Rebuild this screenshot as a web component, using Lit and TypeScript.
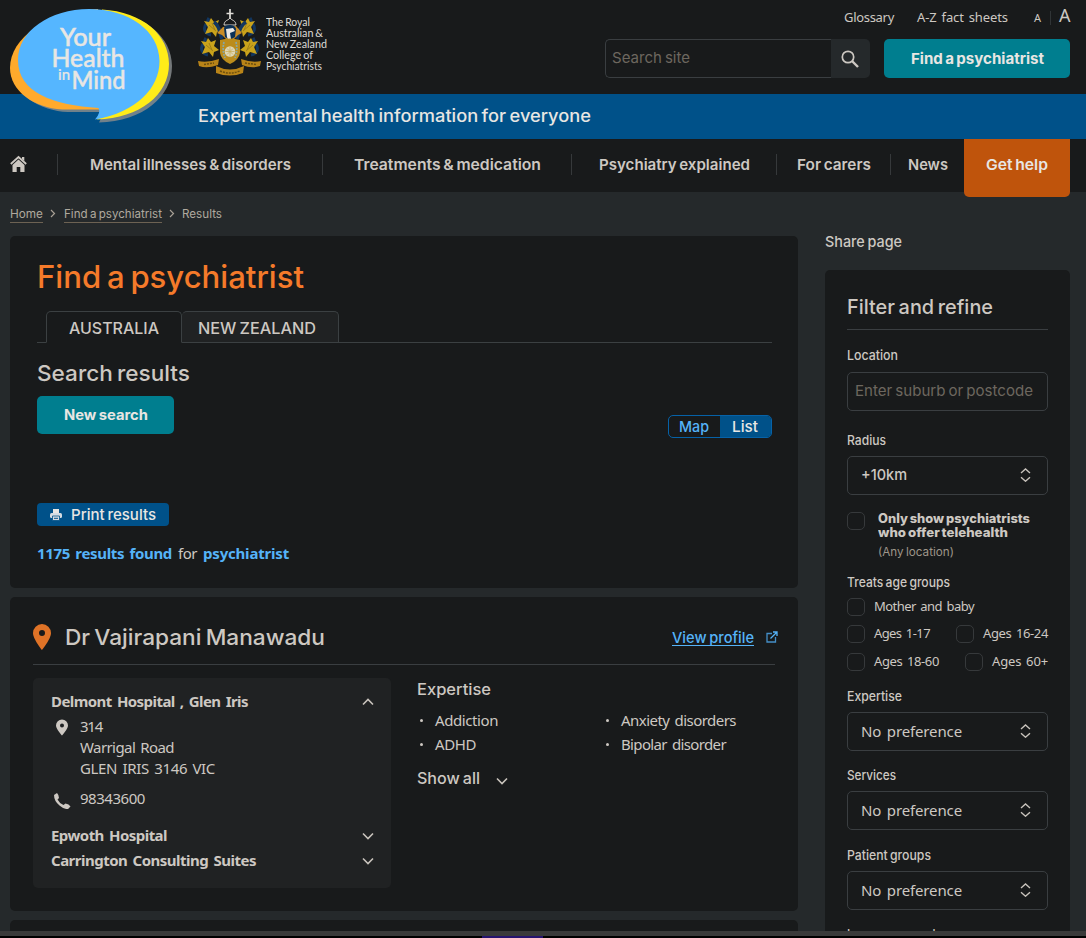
import { LitElement, html, css, svg } from "lit";
import { customElement, property } from "lit/decorators.js";

/** One line of text that spans `w` pixels: headings stretch, body text is tracked. */
@customElement("fit-text")
class FitText extends LitElement {
  @property({ type: Number }) w = 0;
  static styles = css`
    :host { display: block; white-space: nowrap; flex: none; }
    .t { display: inline-block; vertical-align: top; transform-origin: 0 50%; }
  `;
  firstUpdated() {
    const el = this.renderRoot.querySelector(".t") as HTMLElement;
    const n = (this.textContent || "").trim().length;
    const body = getComputedStyle(this).fontFamily.includes("Noto");
    el.style.wordSpacing = body ? "0.12em" : "-0.08em";
    const natural = el.getBoundingClientRect().width;
    this.style.width = `${this.w}px`;
    if (body) el.style.letterSpacing = `${(this.w - natural) / n}px`;
    else el.style.transform = `scaleX(${this.w / natural})`;
  }
  render() {
    return html`<span class="t"><slot></slot></span>`;
  }
}

const t = (text: string, w: number, cls = "") => html`<fit-text class=${cls} .w=${w}>${text}</fit-text>`;

const chevron = (up = false) => html`<svg class="chev" width="12" height="8" viewBox="0 0 12 8">
  <path d=${up ? "M1 6.5 6 1.5 11 6.5" : "M1 1.5 6 6.5 11 1.5"} fill="none" stroke="#c8c3bc" stroke-width="1.6"/></svg>`;
const crumbArrow = html`<svg class="crumb-arrow" width="6" height="9" viewBox="0 0 6 9"><path d="M1 1 4.5 4.5 1 8" fill="none" stroke="#a8a095" stroke-width="1.2"/></svg>`;
const sorter = html`<svg width="11" height="14" viewBox="0 0 11 14"><path d="M1 5 5.5 1 10 5M1 9.2 5.5 13.2 10 9.2" fill="none" stroke="#c8c3bc" stroke-width="1.4"/></svg>`;

const leaf = (tf: string) => svg`<g transform=${tf}>
  <path d="M7 19C1 18-1 13 2 8M9 14C4 13 2 6 5 2" fill="none" stroke="#12365f" stroke-width="3"/>
  <path d="M0 5 5 6 7 2 10 6 15 4 13 10 18 14 13 16 12 21 8 16 1 18 4 11Z" fill="#c9a21b"/>
  <path d="M5 9 12 15M8 7 11 14" stroke="#9a7a18" stroke-width=".9"/></g>`;

const crest = html`<svg class="crest" width="64" height="68" viewBox="0 0 64 68">
  ${leaf("translate(6 8)")}${leaf("translate(57 8) scale(-1 1)")}
  ${leaf("translate(3 28)")}${leaf("translate(60 28) scale(-1 1)")}
  <path d="M16 14C22 18 22 26 24 31M48 14C41 18 41 26 39 31" fill="none" stroke="#12365f" stroke-width="3.5"/>
  <path d="M32 1V13M28.500 5.500H35.500" stroke="#e0ded9" stroke-width="1.700"/>
  <path d="M26 17C26.500 12 29.500 13 32 10 34.500 13 37.500 12 38 17Z" fill="#17191b" stroke="#d6d3ce" stroke-width="1"/>
  <path d="M25 19 19 25 24 27 28 31H36L40 27 44 25 38 18Z" fill="#c98c27"/>
  <path d="M26 20C27 16 37 16 38 21L37 29 32 32 27 29Z" fill="#0b3158"/>
  <path d="M28 21 35 20 37 23 32 25 33 31 37 34H31L29 29Z" fill="#eae8e4"/>
  <path d="M22 32Q32 29 42 32V45Q41 52 32 56 23 52 22 45Z" fill="#bb8c1c"/>
  <path d="M26 34Q24 42 27 50M38 34Q40 42 37 50" fill="none" stroke="#87a7a5" stroke-width="1.700" stroke-dasharray="2 1"/>
  <circle cx="32" cy="43.500" r="5.300" fill="#ded7b7"/><path d="M32 39V48M27.500 43.500H36.500M29 40.500 35 46.500M35 40.500 29 46.500" stroke="#c7a951" stroke-width=".7"/>
  <path d="M0 53Q10 55 21 51L20 57Q9 61 1 58ZM63 53Q54 55 43 51L44 57Q54 61 62 58Z" fill="#b98418"/>
  <path d="M18 58Q32 65 46 58L45 65Q32 70 18 65Z" fill="#b98418"/>
  <path d="M6 56.500 16 55M47 55 58 56.500M22 63Q32 67 42 63" fill="none" stroke="#6e500f" stroke-width="1.500" stroke-dasharray="2 1"/>
</svg>`;

const bubble = html`<svg class="bubble" width="180" height="130" viewBox="0 0 180 130">
  <path d="M104 11C145 14 172 37 172 66C172 97 143 121 99 122.500L104 112H68C40 111 14 94 11 72Z" fill="#85898b" opacity=".85"/>
  <path d="M98 9C46 12 10 38 10 68C10 91 34 108 62 109.500H99L104 100Z" fill="#ffaa2c"/>
  <path d="M102 9.500C143 12 169 35 169 64C169 95 140 118 97 119.500L110 100Z" fill="#ffec19"/>
  <path d="M89 9C129 9 159.500 31 159.500 61C159.500 88 137 112 95 119.500Q101 113 98.500 108C54 105 18 93 18 60C18 31 50 9 89 9Z" fill="#55b6ff"/>
  <g fill="#e8e6e3" stroke="#e8e6e3" stroke-width=".45" font-family="Lato, sans-serif">
    <text x="60" y="46" font-size="24" textLength="51" lengthAdjust="spacingAndGlyphs">Your</text>
    <text x="51.500" y="67.300" font-size="25" textLength="73" lengthAdjust="spacingAndGlyphs">Health</text>
    <text x="58" y="80" font-size="15" textLength="12" lengthAdjust="spacingAndGlyphs" stroke-width=".2">in</text>
    <text x="71.500" y="88.700" font-size="25" textLength="54" lengthAdjust="spacingAndGlyphs">Mind</text>
  </g>
</svg>`;

@customElement("app-root")
class AppRoot extends LitElement {
  static styles = css`
    * { box-sizing: border-box; }
    :host { display: flex; flex-direction: column; height: 938px; overflow: hidden; position: relative; background: #25292b; color: #cdc8c2; font: 500 15px/20px Inter, sans-serif; }
    svg { display: block; flex: none; }
    .noto { font-family: "Noto Sans", sans-serif; font-weight: 400; }
    .bold { font-weight: 700; }
    .bubble { position: absolute; left: 0; top: 0; }
    .top { height: 94px; flex: none; background: #181a1b; display: flex; justify-content: space-between; padding: 8px 16px 0 198px; }
    .college { display: flex; gap: 4px; }
    .college-name { padding-top: 9px; font: 400 10.5px/10.900px Lato, sans-serif; color: #dedbd6; }
    .tools { width: 465px; }
    .links { display: flex; justify-content: flex-end; height: 31px; font-size: 13px; line-height: 18px; }
    .links .az { margin-left: 23px; }
    .small-a { margin-left: 26px; font-size: 11px; line-height: 19px; }
    .sep-a { width: 1px; height: 14px; margin: 3px 8px 0; background: #303436; }
    .big-a { font-size: 18px; line-height: 15px; }
    .searchrow { display: flex; height: 39px; }
    .search { width: 226px; border: 1px solid #3a3e41; border-right: 0; border-radius: 5px 0 0 5px; padding: 8px 6px; font-weight: 400; color: #6d675f; }
    .go { width: 39px; background: #25292b; border-radius: 0 5px 5px 0; display: grid; place-items: center; padding-right: 2px; }
    .find { margin-left: 14px; width: 186px; }
    .teal { background: #007e8f; border-radius: 5px; display: grid; place-items: center; font-weight: 700; color: #e8e6e3; }
    .tag { flex: none; height: 45px; background: #005189; padding: 12px 0 0 197.500px; font-size: 17px; color: #e8e6e3; }
    .nav { flex: none; height: 53px; background: #181a1b; display: flex; padding: 15px 16px 0 10px; line-height: 21px; font-weight: 600; }
    .nav .cell { height: 21px; display: flex; justify-content: center; border-left: 1px solid #36393b; }
    .home { width: 47px; padding-top: 1px; }
    .c1 { width: 265px; } .c2 { width: 249px; } .c3 { width: 205px; } .c4 { width: 114px; } .c5 { width: 74px; }
    .help { width: 106px; height: 58px; margin-top: -15px; background: #bf540c; color: #e8e6e3; border-radius: 0 0 5px 5px; display: grid; justify-items: center; padding-top: 15px; z-index: 1; }
    .crumbs { flex: none; height: 44px; display: flex; padding: 14px 0 0 10px; font-size: 11.500px; line-height: 16px; font-weight: 400; color: #b0a99f; }
    .crumbs .u { height: 17px; border-bottom: 1px solid #6d6253; }
    .crumb-arrow { margin: 3px 7.500px 0 7px; width: 6px; }
    .page { flex: 1; min-height: 0; display: flex; gap: 27px; padding: 0 16px 0 10px; overflow: hidden; }
    .main { width: 788px; display: flex; flex-direction: column; }
    .card { background: #181a1b; border-radius: 5px; flex: none; }
    .summary { height: 352px; padding: 21px 26px 0 27px; }
    .h1 { font-size: 31px; line-height: 40px; color: #f57a2a; font-weight: 500; }
    .tabs { display: flex; margin-top: 14px; height: 32px; padding-left: 9px; border-bottom: 1px solid #3b4042; }
    .tab { height: 32px; border: 1px solid #3b4042; border-bottom-color: #181a1b; border-radius: 5px 5px 0 0; display: flex; justify-content: center; padding-top: 7px; width: 136px; font-size: 15.500px; }
    .tab.off { width: 157px; height: 31px; border-left: 0; border-bottom: 0; background: #202223; padding-right: 6px; }
    .h2 { font-size: 22px; line-height: 30px; font-weight: 500; margin-top: 15px; }
    .new { width: 137px; height: 38px; margin-top: 8px; font-size: 14px; }
    .toggle { display: flex; width: 104px; height: 23px; margin: -19px 0 0 auto; border: 1px solid #0662a8; border-radius: 5px; overflow: hidden; line-height: 21px; color: #55b3f8; }
    .m { padding-left: 10px; width: 51px; } .l { flex: 1; padding-left: 12px; background: #005189; color: #e8e6e3; }
    .print { display: flex; align-items: center; gap: 9px; width: 132px; height: 23px; margin-top: 65px; padding-left: 13px; background: #005189; border-radius: 4px; color: #e8e6e3; }
    .found { display: flex; gap: 6px; margin-top: 17px; color: #55b3f8; }
    .found .for { color: #cdc8c2; }
    .doctor { height: 314px; margin-top: 9px; padding: 27px 20px 0 23px; }
    .head { display: flex; align-items: center; height: 26px; }
    .name { margin: -1px 0 0 14px; font-size: 22px; line-height: 26px; }
    .profile { margin-left: auto; color: #55b3f8; height: 17px; border-bottom: 1px solid #55b3f8; line-height: 17px; }
    .ext { margin-left: 12px; }
    .rule { height: 1px; background: #3a3e41; margin: 14px 3px 0 0; }
    .cols { display: flex; gap: 26px; margin-top: 13px; }
    .places { width: 358px; height: 210px; background: #202223; border-radius: 5px; padding: 13px 17px 0 18px; }
    .place { display: flex; justify-content: space-between; align-items: center; height: 20px; }
    .place .chev { margin-top: 2px; }
    .addr { display: flex; margin-top: 5px; line-height: 21px; }
    .ico { width: 29px; padding: 3px 0 0 4px; }
    .phone { margin-top: 9px; } .phone .ico { padding: 5px 0 0 3px; }
    .p2 { margin-top: 16px; } .p3 { margin-top: 5px; }
    .exp { padding-top: 1px; }
    .exp-title { font-size: 16px; font-weight: 500; }
    .list { display: grid; grid-template-columns: 186px 140px; margin-top: 9px; line-height: 24px; }
    .li { display: flex; padding-left: 3px; align-items: center; }
    .li::before { content: ""; width: 3px; height: 3px; margin-right: 12px; border-radius: 50%; background: #cdc8c2; }
    .show { display: flex; align-items: center; gap: 16px; margin-top: 12px; font-size: 16px; }
    .show .chev { margin-top: 5px; }
    .next { height: 60px; margin-top: 9px; }
    .side { width: 245px; }
    .share { line-height: 12px; padding-bottom: 22px; }
    .panel { height: 700px; padding: 24px 22px 0; font-size: 13px; line-height: 16px; font-weight: 500; }
    .filter { font-size: 20px; line-height: 26px; font-weight: 500; }
    .panel .rule { margin: 9px 0 17px; }
    .input { height: 39px; border: 1px solid #3a3e41; border-radius: 5px; padding: 8px 7px; margin-top: 9px; font-size: 15px; line-height: 20px; font-weight: 400; color: #6d675f; }
    .select { height: 39px; border: 1px solid #3a3e41; border-radius: 5px; padding: 0 16px 2px 13px; display: flex; justify-content: space-between; align-items: center; font-size: 15px; }
    .g21 { margin-top: 21px; } .g17 { margin-top: 17px; } .g16 { margin-top: 16px; } .g8 { margin-top: 8px; }
    .box { width: 18px; height: 18px; border: 1px solid #36393b; border-radius: 5px; flex: none; }
    .tele { display: flex; gap: 13px; margin-top: 17px; line-height: 14px; font-weight: 800; font-size: 12.500px; }
    .any { font-size: 11.500px; font-weight: 400; color: #9e968a; margin-top: 4px; line-height: 16px; }
    .treat { margin-top: 14px; }
    .ages { display: flex; margin-top: 8px; height: 18px; line-height: 16px; gap: 9px; }
    .ages + .ages { margin-top: 9px; } .ages.last { margin-top: 10px; }
    .ages .second { margin-left: auto; }
    .dock { height: 7px; flex: none; background: #3a3a3a; border-bottom: 2px solid #000; position: relative; }
    .dock::after { content: ""; position: absolute; left: 482px; top: 5px; width: 61px; height: 2px; background: #26136e; }
  `;

  private select(label: string, lw: number, value: string, vw: number, gap: string) {
    return html`${t(label, lw, gap)}<div class="select g8">${t(value, vw, value[0] === "N" ? "noto" : "")}${sorter}</div>`;
  }

  render() {
    return html`
      <header class="top">
        <div class="college">${crest}
          <div class="college-name">${t("The Royal", 44)}${t("Australian &", 57)}${t("New Zealand", 61)}${t("College of", 47)}${t("Psychiatrists", 56)}</div>
        </div>
        <div class="tools">
          <div class="links noto">${t("Glossary", 50)}${t("A-Z fact sheets", 91, "az")}${t("A", 8, "small-a")}<span class="sep-a"></span>${t("A", 11, "big-a")}</div>
          <div class="searchrow">
            <div class="search">${t("Search site", 78)}</div>
            <div class="go"><svg width="18" height="18" viewBox="0 0 18 18"><circle cx="7" cy="7" r="5.700" fill="none" stroke="#cdc8c2" stroke-width="1.700"/><path d="m11 11 6 6" stroke="#cdc8c2" stroke-width="2.400"/></svg></div>
            <div class="find teal">${t("Find a psychiatrist", 133)}</div>
          </div>
        </div>
      </header>
      <div class="tag">${t("Expert mental health information for everyone", 393)}</div>
      <nav class="nav">
        <div class="home"><svg width="17" height="18" viewBox="0 0 17 18"><path d="M.8 9 8.500 2 16.200 9" fill="none" stroke="#cdc8c2" stroke-width="1.800"/><path d="M12 2h2.300v4L12 4ZM8.500 4.600 14.500 10V17H10.300V12H6.700V17H2.500V10Z" fill="#cdc8c2"/></svg></div>
        <div class="cell c1">${t("Mental illnesses & disorders", 201)}</div>
        <div class="cell c2">${t("Treatments & medication", 187)}</div>
        <div class="cell c3">${t("Psychiatry explained", 151)}</div>
        <div class="cell c4">${t("For carers", 74)}</div>
        <div class="cell c5">${t("News", 40)}</div>
        <div class="help">${t("Get help", 62)}</div>
      </nav>
      <div class="crumbs">${t("Home", 33, "u")}${crumbArrow}${t("Find a psychiatrist", 98, "u")}${crumbArrow}${t("Results", 40)}</div>
      <div class="page">
        <main class="main">
          <section class="card summary">
            ${t("Find a psychiatrist", 267, "h1")}
            <div class="tabs"><div class="tab">${t("AUSTRALIA", 90)}</div><div class="tab off">${t("NEW ZEALAND", 118)}</div></div>
            ${t("Search results", 153, "h2")}
            <div class="new teal">${t("New search", 84)}</div>
            <div class="toggle"><div class="m">${t("Map", 30)}</div><div class="l">${t("List", 26)}</div></div>
            <div class="print"><svg width="12" height="12" viewBox="0 0 12 12"><path d="M3 0h6v4H3Z" fill="#e8e6e3"/><rect y="4" width="12" height="5" rx="1.500" fill="#d5dce2"/><path d="M2.500 7h7v4.500h-7Z" fill="#d5dce2" stroke="#005189" stroke-width=".8"/><path d="M4 9.300h4" stroke="#005189"/></svg>${t("Print results", 85)}</div>
            <div class="found noto">${t("1175 results found", 135, "bold")}${t("for", 19, "for")}${t("psychiatrist", 86, "bold")}</div>
          </section>
          <section class="card doctor">
            <div class="head"><svg width="18" height="26" viewBox="0 0 18 26"><path fill-rule="evenodd" d="M9 0a9 9 0 0 0-9 9c0 6 9 17 9 17s9-11 9-17a9 9 0 0 0-9-9Zm0 6a3 3 0 1 1 0 6 3 3 0 0 1 0-6Z" fill="#df7327"/></svg>
              ${t("Dr Vajirapani Manawadu", 260, "name")}${t("View profile", 82, "profile")}
              <svg class="ext" width="12" height="12" viewBox="0 0 12 12"><path d="M6 2.500H1V11H9.500V6" fill="none" stroke="#448fc8" stroke-width="1.300"/><path d="M4.500 7.500 10.800 1.200M7 1h4v4" fill="none" stroke="#55b3f8" stroke-width="1.300"/></svg></div>
            <div class="rule"></div>
            <div class="cols">
              <div class="places noto">
                <div class="place bold">${t("Delmont Hospital , Glen Iris", 197)}${chevron(true)}</div>
                <div class="addr"><div class="ico"><svg width="14" height="17" viewBox="0 0 14 17"><path fill-rule="evenodd" d="M7 .5a6 6 0 0 0-6 6C1 10 7 16.500 7 16.500S13 10 13 6.500a6 6 0 0 0-6-6Zm0 4a2 2 0 1 1 0 4 2 2 0 0 1 0-4Z" fill="#cdc8c2"/></svg></div><div>${t("314", 22)}${t("Warrigal Road", 94)}${t("GLEN IRIS 3146 VIC", 135)}</div></div>
                <div class="addr phone"><div class="ico"><svg width="17" height="16" viewBox="0 0 17 16"><path d="M0 2 3 0Q5 2 5 5L3.500 6.500Q5.500 10.500 9.500 12L11.500 10.500Q15 11 16.500 13.500L14 16Q10 16.500 5.500 12.500 0 8 0 2Z" fill="#cdc8c2"/></svg></div>${t("98343600", 65)}</div>
                <div class="place bold p2">${t("Epwoth Hospital", 116)}${chevron()}</div>
                <div class="place bold p3">${t("Carrington Consulting Suites", 205)}${chevron()}</div>
              </div>
              <div class="exp">
                ${t("Expertise", 74, "exp-title")}
                <div class="list noto"><div class="li">${t("Addiction", 63)}</div><div class="li">${t("Anxiety disorders", 115)}</div><div class="li">${t("ADHD", 41)}</div><div class="li">${t("Bipolar disorder", 105)}</div></div>
                <div class="show">${t("Show all", 63)}${chevron()}</div>
              </div>
            </div>
          </section>
          <section class="card next"></section>
        </main>
        <aside class="side">
          ${t("Share page", 77, "share")}
          <section class="card panel">
            ${t("Filter and refine", 146, "filter")}
            <div class="rule"></div>
            ${t("Location", 51)}
            <div class="input">${t("Enter suburb or postcode", 178)}</div>
            ${this.select("Radius", 39, "+10km", 46, "g21")}
            <div class="tele"><span class="box"></span><div>${t("Only show psychiatrists", 152)}${t("who offer telehealth", 130)}${t("(Any location)", 76, "any")}</div></div>
            ${t("Treats age groups", 103, "treat")}
            <div class="ages noto"><span class="box"></span>${t("Mother and baby", 100)}</div>
            <div class="ages noto"><span class="box"></span>${t("Ages 1-17", 56)}<span class="box second"></span>${t("Ages 16-24", 65)}</div>
            <div class="ages noto last"><span class="box"></span>${t("Ages 18-60", 65)}<span class="box second"></span>${t("Ages 60+", 56)}</div>
            ${this.select("Expertise", 55, "No preference", 101, "g17")}
            ${this.select("Services", 49, "No preference", 101, "g16")}
            ${this.select("Patient groups", 84, "No preference", 101, "g17")}
            ${t("Languages spoken", 106, "g16")}
          </section>
        </aside>
      </div>
      <footer class="dock"></footer>
      ${bubble}
    `;
  }
}
